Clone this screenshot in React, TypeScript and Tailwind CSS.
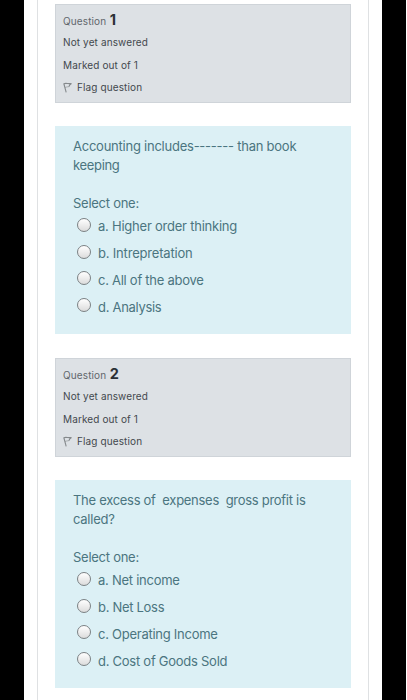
interface Question {
  number: number;
  lines: { text: string; className: string }[];
  options: { text: string; className: string }[];
}

const questions: Question[] = [
  {
    number: 1,
    lines: [
      { text: "Accounting includes------- than book", className: "tracking-[-0.24px]" },
      { text: "keeping", className: "tracking-[-0.32px]" },
    ],
    options: [
      { text: "a. Higher order thinking", className: "tracking-[-0.23px]" },
      { text: "b. Intrepretation", className: "tracking-[-0.19px]" },
      { text: "c. All of the above", className: "tracking-[-0.27px]" },
      { text: "d. Analysis", className: "tracking-[-0.3px]" },
    ],
  },
  {
    number: 2,
    lines: [
      { text: "The excess of  expenses  gross profit is", className: "tracking-[-0.29px]" },
      { text: "called?", className: "tracking-[-0.25px]" },
    ],
    options: [
      { text: "a. Net income", className: "tracking-[-0.26px]" },
      { text: "b. Net Loss", className: "tracking-[-0.3px]" },
      { text: "c. Operating Income", className: "tracking-[-0.26px]" },
      { text: "d. Cost of Goods Sold", className: "tracking-[-0.26px]" },
    ],
  },
];

const FlagIcon = () => (
  <svg width="9" height="11" viewBox="0 0 9 11" fill="none" stroke="#85898c" strokeWidth="1.1">
    <path d="M0.8 1.5L3.2 10.4" />
    <path d="M0.8 1.7C3 0.8 5 2 8.5 1.5C7 2.3 6.2 3.2 6 4.6" />
    <path d="M2 5.6C3.4 4.7 4.6 5 6 4.6" strokeWidth="0.6" />
  </svg>
);

const QuestionInfo = ({ number }: { number: number }) => (
  <div className="h-[99px] border border-[#cfd4d9] bg-[#dde1e5] pl-[7px] pt-1 text-[10px] leading-[22.5px] tracking-[0.12px] text-[#43484d]">
    <h3 className="flex h-[22px] items-baseline gap-[3.5px] text-[#62676c]">
      Question <span className="text-[14.5px] font-bold text-[#2b3035]">{number}</span>
    </h3>
    <p>Not yet answered</p>
    <p>Marked out of 1</p>
    <p className="flex items-center gap-[5px]">
      <FlagIcon />
      Flag question
    </p>
  </div>
);

const QuestionBody = ({ question }: { question: Question }) => (
  <div className="mt-[23px] h-[208px] bg-[#dcf0f5] pl-[18px] pt-[11px] text-[13px] text-[#4b7580]">
    {question.lines.map((line) => (
      <p key={line.text} className={`h-[19px] whitespace-pre leading-[19px] ${line.className}`}>
        {line.text}
      </p>
    ))}
    <p className="mt-[19px] h-[19px] leading-[19px] tracking-[-0.26px]">Select one:</p>
    <div className="flex flex-col">
      {question.options.map((option) => (
        <label key={option.text} className="flex h-[26.8px] items-center">
          <input
            type="radio"
            name={`q${question.number}`}
            className="mb-[3px] ml-[3.5px] mr-[7.5px] size-[14px] appearance-none rounded-full border border-[#7b8184] bg-linear-to-b from-white to-[#dcdcdc]"
          />
          <span className={`whitespace-pre pt-px ${option.className}`}>{option.text}</span>
        </label>
      ))}
    </div>
  </div>
);

const App = () => {
  return (
    <div className="h-[700px] w-[407px] overflow-hidden bg-white pr-px font-['Inter','Liberation_Sans',sans-serif]">
      <div className="h-full border-x-[24px] border-black bg-white px-[13px]">
        <main className="flex h-full flex-col gap-6 border-x border-[#dfe1e3] px-[17px] pt-1">
          {questions.map((question) => (
            <section key={question.number} className="h-[330px]">
              <QuestionInfo number={question.number} />
              <QuestionBody question={question} />
            </section>
          ))}
        </main>
      </div>
    </div>
  );
};

export default App;
